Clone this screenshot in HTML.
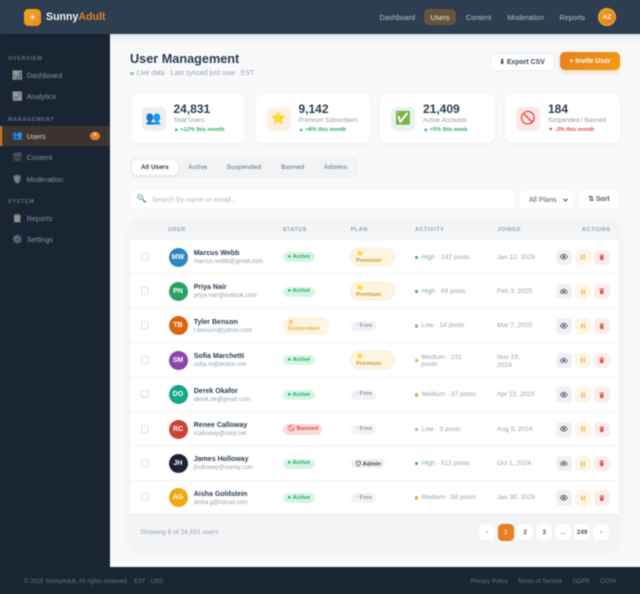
<!DOCTYPE html>
<html lang="en"><head><meta charset="utf-8"><title>SunnyAdult - User Management</title>
<style>
*{box-sizing:border-box;margin:0;padding:0}
html,body{width:640px;height:594px;overflow:hidden;background:#f8f9fb}
body{font-family:"Liberation Sans",sans-serif;color:#2c3e50}
#c{position:absolute;left:0;top:0;width:640px;height:594px;overflow:hidden}
#f{position:absolute;left:0;top:0;width:640px;height:594px;filter:blur(.4px)}
.a,.a>*{position:absolute;white-space:nowrap}
.t{position:absolute;white-space:nowrap;line-height:1}
.x{position:absolute}
header{position:absolute;left:0;top:0;width:640px;height:34px;background:#2c3e50;z-index:3}
footer{position:absolute;left:-6px;top:567px;width:652px;height:33px;background:#1a2533}
.nav{font-size:7.3px;color:rgba(255,255,255,.66);top:14px}
.lab{font-size:5.3px;letter-spacing:.8px;color:#66727f;left:8px;font-weight:700}
.it{font-size:7.3px;color:#87929e;left:26.7px}
.ic{font-size:8.5px;left:12px;opacity:.55}
.card{position:absolute;top:94px;width:114.5px;height:49px;background:#fff;border-radius:7px;box-shadow:0 1px 5px rgba(0,0,0,.05)}
.si{position:absolute;left:11px;top:12.5px;width:24px;height:24px;border-radius:6px;font-size:12.5px;display:flex;align-items:center;justify-content:center}
.n{left:43px;top:9px;font-size:12px;font-weight:700;line-height:1;color:#2c3e50}
.l{left:43px;top:24px;font-size:6.2px;line-height:1;color:#999}
.tr{left:43px;top:33.5px;font-size:5.5px;line-height:1;font-weight:700;color:#27ae60}
.tab{font-size:6.4px;font-weight:700;color:#8a929c;top:164.5px}
.th{position:absolute;top:227.5px;font-size:5.4px;font-weight:700;letter-spacing:.6px;color:#95a0ab;line-height:1;white-space:nowrap}
.row{position:absolute;left:130px;width:489px;height:34.4px;background:#fff;border-bottom:1px solid #f2f4f6}
.cb{position:absolute;left:10.7px;top:12.5px;width:8px;height:8px;border:1px solid #dcdfe3;border-radius:2px;background:#fff}
.av{position:absolute;left:38.5px;top:7.5px;width:19px;height:19px;border-radius:50%;color:#fff;font-size:7px;font-weight:700;display:flex;align-items:center;justify-content:center}
.nm{position:absolute;left:63.7px;top:10px;font-size:7.05px;font-weight:700;color:#2c3e50;line-height:1;white-space:nowrap}
.em{position:absolute;left:63.7px;top:19px;font-size:6px;color:#9aa2ab;line-height:1;white-space:nowrap}
.p{position:absolute;font-size:5.9px;font-weight:700;border-radius:8px;line-height:1;white-space:nowrap}
.act{left:152.5px;top:12.2px;height:10px;width:32px;background:#d5f5e3;color:#27ae60;padding:2.8px 0 0 5px}
.prem{left:220px;top:8px;width:45px;height:18px;background:#fef5e0;border:1px solid #fbeccb;border-radius:9px;color:#c9992b;padding:2px 0 0 5px;line-height:7px}
.free{left:221px;top:12.5px;height:9.5px;width:25px;background:#f0f2f5;color:#8f99a3;padding:2.4px 0 0 5px}
.adm{left:221px;top:12.5px;height:9.5px;width:34px;background:#eceef1;color:#3c4a58;padding:2.4px 0 0 5px}
.adm svg{vertical-align:-1px;margin-right:1.5px}
.ban{left:152.5px;top:12px;height:10.5px;width:39.5px;background:#fadbd8;color:#e74c3c;padding:2.8px 0 0 5px}
.sus{left:152.5px;top:8px;height:18px;width:47.5px;background:#fef5e0;color:#f0b040;padding:2px 0 0 5px;line-height:7px;border-radius:9px}
.dot{position:absolute;left:285px;top:15.6px;width:3.4px;height:3.4px;border-radius:50%}
.ac{position:absolute;left:291.5px;top:14.5px;font-size:6.6px;color:#9aa2ab;line-height:1;white-space:nowrap}
.jn{position:absolute;left:367px;top:14.5px;font-size:6.6px;color:#9aa2ab;line-height:1;white-space:nowrap}
.b{position:absolute;top:9.5px;width:15.5px;height:15.5px;border-radius:4.5px;display:flex;align-items:center;justify-content:center}
.b1{left:426px;background:#eef0f3}
.b2{left:445px;background:#fef5e7}
.b3{left:464px;background:#fdecea}
.pg{position:absolute;top:524px;width:16.2px;height:16.2px;background:#fff;border-radius:4.5px;font-size:6.4px;font-weight:700;color:#4a5664;display:flex;align-items:center;justify-content:center;box-shadow:0 0 2px rgba(0,0,0,.04)}
.fl{position:absolute;top:578.5px;font-size:6px;color:#66727e;line-height:1;white-space:nowrap}
</style></head><body>
<div id="c"><div id="f">
<svg width="0" height="0" style="position:absolute">
<symbol id="eye" viewBox="0 0 8 6"><path d="M.3 3C1.4 1.2 2.6.4 4 .4S6.6 1.2 7.7 3C6.6 4.8 5.4 5.6 4 5.6S1.4 4.8.3 3Z" fill="none" stroke="#2c3e50" stroke-width=".8"/><circle cx="4" cy="3" r="1.3" fill="#2c3e50"/></symbol>
<symbol id="pause" viewBox="0 0 6 6"><path d="M1.2.5h1.1v5H1.2zM3.7.5h1.1v5H3.7z" fill="#eda83a"/></symbol>
<symbol id="trash" viewBox="0 0 6 7"><path d="M2.1.3h1.8l.3.6h1.4v.8H.4V.9h1.4ZM.9 2.2h4.2l-.3 4.5H1.2Z" fill="#e0554a"/></symbol>
</svg>

<div class="x" style="left:-6px;top:-6px;width:652px;height:606px;background:#f8f9fb"></div>
<div class="x" style="left:-6px;top:-6px;width:652px;height:40px;background:#2c3e50;box-shadow:0 2px 8px rgba(0,0,0,.12);z-index:2"></div>
<div class="x" style="left:-6px;top:34px;width:116px;height:533px;background:#1a2533"></div>

<header>
<div style="position:absolute;left:24px;top:8.5px;width:17px;height:17px;border-radius:4.5px;background:linear-gradient(135deg,#f5a81c,#e98a20);color:#fff;font-size:8.5px;line-height:17px;text-align:center">☀</div>
<div class="t" style="left:46px;top:12px;font-size:10.6px;font-weight:700;color:#f4f6f8">Sunny<span style="color:#e67e22">Adult</span></div>
<div class="t nav" style="left:379.5px">Dashboard</div>
<div style="position:absolute;left:424px;top:9px;width:32px;height:16px;border-radius:4.5px;background:#66543f"></div>
<div class="t nav" style="left:430.5px;color:#f3ece4">Users</div>
<div class="t nav" style="left:466px">Content</div>
<div class="t nav" style="left:507.5px">Moderation</div>
<div class="t nav" style="left:559.5px">Reports</div>
<div style="position:absolute;left:598px;top:8px;width:18px;height:18px;border-radius:50%;background:linear-gradient(135deg,#f39c12,#e67e22);border:1px solid #f1b040;color:#fff;font-size:6.6px;font-weight:700;line-height:17px;text-align:center">AZ</div>
</header>

<div class="t lab" style="top:57px">OVERVIEW</div>
<div class="t ic" style="top:70.5px">📊</div><div class="t it" style="top:71.7px">Dashboard</div>
<div class="t ic" style="top:92px">📈</div><div class="t it" style="top:93.3px">Analytics</div>
<div class="t lab" style="top:118px">MANAGEMENT</div>
<div style="position:absolute;left:0;top:126px;width:110px;height:19.5px;background:#3c3430;border-left:2px solid #e67e22"></div>
<div class="t ic" style="top:131px;opacity:1">👥</div><div class="t it" style="top:133px;color:#d6dade">Users</div>
<div style="position:absolute;left:90px;top:132px;width:10px;height:7.5px;border-radius:4px;background:#e67e22;color:#f7d9b8;font-size:5px;font-weight:700;line-height:7.5px;text-align:center">8</div>
<div class="t ic" style="top:153px">🎬</div><div class="t it" style="top:154px">Content</div>
<div class="t ic" style="top:174.5px">🛡️</div><div class="t it" style="top:175.5px">Moderation</div>
<div class="t lab" style="top:200px">SYSTEM</div>
<div class="t ic" style="top:213.5px">📋</div><div class="t it" style="top:214.5px">Reports</div>
<div class="t ic" style="top:234.5px">⚙️</div><div class="t it" style="top:236px">Settings</div>

<div class="t" style="left:130px;top:53.3px;font-size:12.7px;font-weight:700;color:#2c3e50">User Management</div>
<div style="position:absolute;left:130px;top:71.7px;width:3.8px;height:3.8px;border-radius:50%;background:#7fd1a8"></div>
<div class="t" style="left:136.7px;top:70.5px;font-size:6.9px;color:#9aa2ab">Live data · Last synced just now · EST</div>

<div style="position:absolute;left:489.5px;top:52.5px;width:65px;height:18px;background:#fff;border:1px solid #eceef1;border-radius:4.5px;font-size:6.9px;font-weight:700;color:#3c4a58;line-height:17px;text-align:center">⬇ Export CSV</div>
<div style="position:absolute;left:560px;top:52.3px;width:60px;height:18.2px;border-radius:5px;background:linear-gradient(135deg,#e67e22,#f39c12);box-shadow:0 2px 5px rgba(230,126,34,.3);font-size:6.9px;font-weight:700;color:#fff;line-height:19.5px;text-align:center">+ Invite User</div>

<div class="card a" style="left:130.5px"><div class="si" style="background:#eceef1">👥</div><div class="n">24,831</div><div class="l">Total Users</div><div class="tr">▲ +12% this month</div></div>
<div class="card a" style="left:255.5px"><div class="si" style="background:#fdf0e4">⭐</div><div class="n">9,142</div><div class="l">Premium Subscribers</div><div class="tr">▲ +8% this month</div></div>
<div class="card a" style="left:380px"><div class="si" style="background:#e5f5ec">✅</div><div class="n">21,409</div><div class="l">Active Accounts</div><div class="tr">▲ +5% this week</div></div>
<div class="card a" style="left:505px"><div class="si" style="background:#fde8e6">🚫</div><div class="n">184</div><div class="l">Suspended / Banned</div><div class="tr" style="color:#e74c3c">▼ -3% this month</div></div>

<div style="position:absolute;left:130px;top:157px;width:228px;height:20.5px;background:#f1f3f5;border-radius:7px"></div>
<div style="position:absolute;left:132px;top:159.5px;width:46px;height:15.5px;background:#fff;border-radius:5px;box-shadow:0 1px 3px rgba(0,0,0,.07)"></div>
<div class="t tab" style="left:141px;color:#2c3e50">All Users</div>
<div class="t tab" style="left:188px">Active</div>
<div class="t tab" style="left:226.7px">Suspended</div>
<div class="t tab" style="left:281px">Banned</div>
<div class="t tab" style="left:323.7px">Admins</div>

<div style="position:absolute;left:130.5px;top:190px;width:383px;height:19px;background:#fff;border-radius:5px;box-shadow:0 0 3px rgba(0,0,0,.03)"></div>
<div class="t" style="left:136.5px;top:195px;font-size:8px">🔍</div>
<div class="t" style="left:152px;top:196.5px;font-size:7.1px;color:#b4bac1">Search by name or email...</div>
<div style="position:absolute;left:520px;top:190px;width:52.5px;height:19px;background:#fff;border-radius:5px;box-shadow:0 0 3px rgba(0,0,0,.04)"></div>
<div class="t" style="left:529px;top:196.5px;font-size:7.1px;color:#55606c">All Plans</div>
<svg style="position:absolute;left:563px;top:198px" width="5" height="4" viewBox="0 0 5 4"><path d="M.5.8 2.5 3 4.5.8" fill="none" stroke="#3c4a58" stroke-width="1"/></svg>
<div style="position:absolute;left:579px;top:190px;width:40px;height:19px;background:#fff;border-radius:5px;box-shadow:0 0 3px rgba(0,0,0,.04);font-size:6.9px;font-weight:700;color:#55606c;line-height:20px;text-align:center">⇅ Sort</div>

<div style="position:absolute;left:130px;top:220px;width:489px;height:328px;background:#f2f4f6;border-radius:8px;box-shadow:0 2px 10px rgba(0,0,0,.05)"></div>
<div class="th" style="left:168.3px">USER</div><div class="th" style="left:282.7px">STATUS</div><div class="th" style="left:350.7px">PLAN</div><div class="th" style="left:415px">ACTIVITY</div><div class="th" style="left:497.3px">JOINED</div><div class="th" style="left:582px">ACTIONS</div>

<div class="row" style="top:240px"><div class="cb"></div><div class="av" style="background:#2e86c1">MW</div><div class="nm">Marcus Webb</div><div class="em">marcus.webb@gmail.com</div><div class="p act">● Active</div><div class="p prem">⭐<br>Premium</div><div class="dot" style="background:#27ae60"></div><div class="ac">High · 142 posts</div><div class="jn">Jan 12, 2025</div><div class="b b1"><svg width="7.5" height="5.6"><use href="#eye"/></svg></div><div class="b b2"><svg width="6" height="6"><use href="#pause"/></svg></div><div class="b b3"><svg width="5.5" height="6.4"><use href="#trash"/></svg></div></div>
<div class="row" style="top:274.4px"><div class="cb"></div><div class="av" style="background:#27a35f">PN</div><div class="nm">Priya Nair</div><div class="em">priya.nair@outlook.com</div><div class="p act">● Active</div><div class="p prem">⭐<br>Premium</div><div class="dot" style="background:#27ae60"></div><div class="ac">High · 89 posts</div><div class="jn">Feb 3, 2025</div><div class="b b1"><svg width="7.5" height="5.6"><use href="#eye"/></svg></div><div class="b b2"><svg width="6" height="6"><use href="#pause"/></svg></div><div class="b b3"><svg width="5.5" height="6.4"><use href="#trash"/></svg></div></div>
<div class="row" style="top:308.8px"><div class="cb"></div><div class="av" style="background:#d9650f">TB</div><div class="nm">Tyler Benson</div><div class="em">t.benson@yahoo.com</div><div class="p sus"><svg width="5.5" height="5.5" style="display:block;margin:.5px 0 .8px"><use href="#pause"/></svg>Suspended</div><div class="p free">· Free</div><div class="dot" style="background:#a5a9ae"></div><div class="ac">Low · 14 posts</div><div class="jn">Mar 7, 2025</div><div class="b b1"><svg width="7.5" height="5.6"><use href="#eye"/></svg></div><div class="b b2"><svg width="6" height="6"><use href="#pause"/></svg></div><div class="b b3"><svg width="5.5" height="6.4"><use href="#trash"/></svg></div></div>
<div class="row" style="top:343.2px"><div class="cb"></div><div class="av" style="background:#8e44ad">SM</div><div class="nm">Sofia Marchetti</div><div class="em">sofia.m@proton.me</div><div class="p act">● Active</div><div class="p prem">⭐<br>Premium</div><div class="dot" style="background:#e9a23b"></div><div class="ac" style="top:10.5px;line-height:7.6px">Medium · 231<br>posts</div><div class="jn" style="top:10.5px;line-height:8px">Nov 19,<br>2024</div><div class="b b1"><svg width="7.5" height="5.6"><use href="#eye"/></svg></div><div class="b b2"><svg width="6" height="6"><use href="#pause"/></svg></div><div class="b b3"><svg width="5.5" height="6.4"><use href="#trash"/></svg></div></div>
<div class="row" style="top:377.6px"><div class="cb"></div><div class="av" style="background:#17a589">DO</div><div class="nm">Derek Okafor</div><div class="em">derek.ok@gmail.com</div><div class="p act">● Active</div><div class="p free">· Free</div><div class="dot" style="background:#e9a23b"></div><div class="ac">Medium · 37 posts</div><div class="jn">Apr 22, 2025</div><div class="b b1"><svg width="7.5" height="5.6"><use href="#eye"/></svg></div><div class="b b2"><svg width="6" height="6"><use href="#pause"/></svg></div><div class="b b3"><svg width="5.5" height="6.4"><use href="#trash"/></svg></div></div>
<div class="row" style="top:412px"><div class="cb"></div><div class="av" style="background:#cb4335">RC</div><div class="nm">Renee Calloway</div><div class="em">rcalloway@corp.net</div><div class="p ban">🚫 Banned</div><div class="p free">· Free</div><div class="dot" style="background:#a5a9ae"></div><div class="ac">Low · 3 posts</div><div class="jn">Aug 5, 2024</div><div class="b b1"><svg width="7.5" height="5.6"><use href="#eye"/></svg></div><div class="b b2"><svg width="6" height="6"><use href="#pause"/></svg></div><div class="b b3"><svg width="5.5" height="6.4"><use href="#trash"/></svg></div></div>
<div class="row" style="top:446.4px"><div class="cb"></div><div class="av" style="background:#1a2533">JH</div><div class="nm">James Holloway</div><div class="em">jholloway@sunny.com</div><div class="p act">● Active</div><div class="p adm"><svg width="5" height="5.6" viewBox="0 0 5 5.6"><path d="M.4.8 2.5.4 4.6.8C4.7 3 3.9 4.4 2.5 5.1 1.1 4.4.3 3 .4.8Z" fill="none" stroke="#3c4a58" stroke-width=".7"/></svg>Admin</div><div class="dot" style="background:#27ae60"></div><div class="ac">High · 512 posts</div><div class="jn">Oct 1, 2024</div><div class="b b1"><svg width="7.5" height="5.6"><use href="#eye"/></svg></div><div class="b b2"><svg width="6" height="6"><use href="#pause"/></svg></div><div class="b b3"><svg width="5.5" height="6.4"><use href="#trash"/></svg></div></div>
<div class="row" style="top:480.8px;border-bottom:1px solid #e9ecef"><div class="cb"></div><div class="av" style="background:#f0a80e">AG</div><div class="nm">Aisha Goldstein</div><div class="em">aisha.g@icloud.com</div><div class="p act">● Active</div><div class="p free">· Free</div><div class="dot" style="background:#e9a23b"></div><div class="ac">Medium · 58 posts</div><div class="jn">Jan 30, 2025</div><div class="b b1"><svg width="7.5" height="5.6"><use href="#eye"/></svg></div><div class="b b2"><svg width="6" height="6"><use href="#pause"/></svg></div><div class="b b3"><svg width="5.5" height="6.4"><use href="#trash"/></svg></div></div>

<div class="t" style="left:140.5px;top:530px;font-size:6.6px;color:#9aa2ab">Showing 8 of 24,831 users</div>
<div class="pg" style="left:479px;color:#8a929c">‹</div>
<div class="pg" style="left:497.7px;background:#e67e22;color:#f9dcc0;height:17px;top:523.5px">1</div>
<div class="pg" style="left:517px">2</div>
<div class="pg" style="left:536px">3</div>
<div class="pg" style="left:555px;color:#8a929c">...</div>
<div class="pg" style="left:574px">249</div>
<div class="pg" style="left:593px;color:#8a929c">›</div>

<footer></footer>
<div class="fl" style="left:24px">© 2026 SunnyAdult. All rights reserved. · EST · USD</div>
<div class="fl" style="left:470.5px">Privacy Policy</div>
<div class="fl" style="left:517.5px">Terms of Service</div>
<div class="fl" style="left:572.5px">GDPR</div>
<div class="fl" style="left:600px">CCPA</div>
</div></div>
</body></html>
